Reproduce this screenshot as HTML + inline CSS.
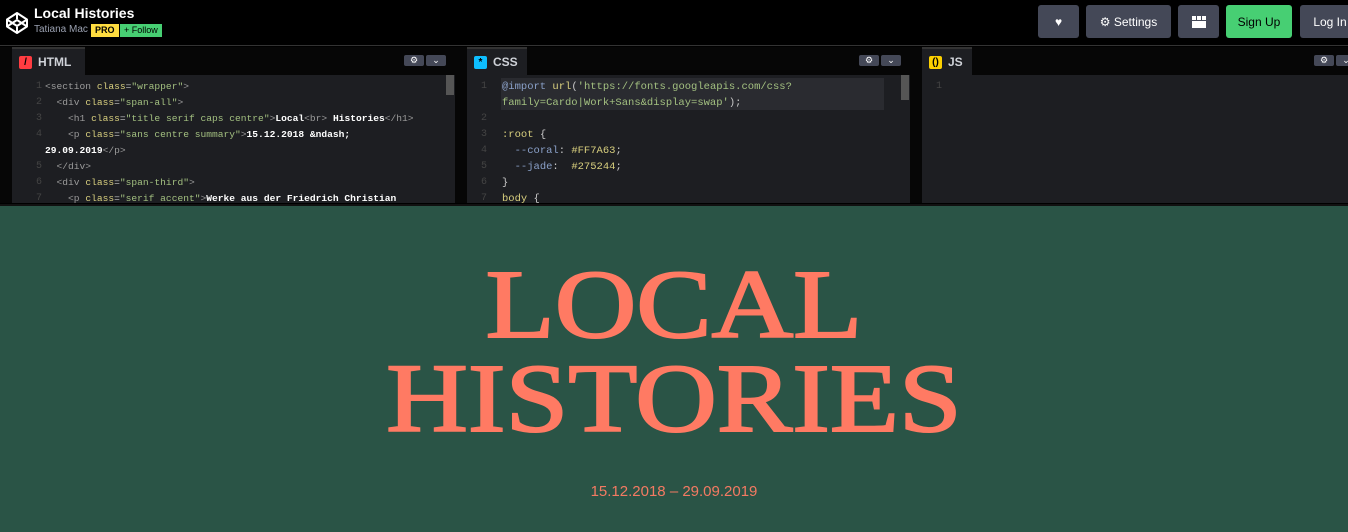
<!DOCTYPE html>
<html><head><meta charset="utf-8"><style>
*{margin:0;padding:0;box-sizing:border-box}
body{width:1348px;height:532px;background:#000;overflow:hidden;font-family:"Liberation Sans",sans-serif;position:relative}
.hdr{position:absolute;left:0;top:0;width:1348px;height:46px;background:#000;border-bottom:1px solid #333}
.logo{position:absolute;left:5px;top:11px}
.title{position:absolute;left:34px;top:5px;color:#fff;font-weight:bold;font-size:14px}
.sub{position:absolute;left:34px;top:24px;font-size:10px;color:#9aa0b0}
.pro{position:absolute;left:91px;top:24px;background:#ffdd40;color:#000;font-size:9px;font-weight:bold;padding:1px 4px;line-height:11px}
.fol{position:absolute;left:120px;top:24px;background:#47cf73;color:#000;font-size:9px;padding:1px 4px;line-height:11px}
.btn{position:absolute;top:5px;height:33px;background:#444857;border-radius:3px;color:#fff;font-size:12px;display:flex;align-items:center;justify-content:center}
.ed{position:absolute;top:47px;height:156px;background:#1d1e22}
.tabbar{position:absolute;left:0;top:0;right:0;height:28px;background:#060606}
.tab{position:absolute;left:0;top:0;height:28px;background:#1d1e22;color:#cfd2d8;font-weight:bold;font-size:12px;display:flex;align-items:center;padding-left:7px;border-top:2px solid #333;}
.ic{width:13px;height:13px;border-radius:2px;margin-right:6px;display:inline-block;font-size:10px;text-align:center;line-height:13px;color:#000}
.sb{position:absolute;top:8px;width:20px;height:11px;background:#444857;border-radius:2px;color:#fff;font-size:9px;line-height:11px;text-align:center}
.code{position:absolute;top:32px;left:0;font-family:"Liberation Mono",monospace;font-size:10.5px;line-height:16px;color:#c8c8c8;white-space:pre}
.ln{position:absolute;left:0;width:30px;text-align:right;color:#444;font-family:"Liberation Mono",monospace;font-size:10px;line-height:16px}
.t{color:#9b9b9b}.a{color:#d8cf7e}.s{color:#a3c080}.w{color:#fff;font-weight:bold}
.res{position:absolute;left:0;top:204px;width:1348px;height:328px;background:#2a5446;border-top:2px solid #111}
.h1{position:absolute;left:0;width:1348px;text-align:center;font-family:"Liberation Serif",serif;font-size:97px;line-height:97px;color:#ff7a63;-webkit-text-stroke:2px #ff7a63;transform:scaleX(1.165);transform-origin:674px 0}
.date{position:absolute;left:0;top:483px;width:1348px;text-align:center;color:#f47a62;font-size:15px}
</style></head><body>
<div class="hdr">
<svg class="logo" width="24" height="24" viewBox="0 0 24 24" fill="none" stroke="#fff" stroke-width="2" stroke-linejoin="round"><path d="M12 2L22 8.5V15.5L12 22L2 15.5V8.5Z M12 2V8 M12 16V22 M2 8.5L12 15L22 8.5 M2 15.5L12 9L22 15.5"/></svg>
<div class="title">Local Histories</div>
<div class="sub">Tatiana Mac</div>
<div class="pro">PRO</div>
<div class="fol">+ Follow</div>
<div class="btn" style="left:1038px;width:41px">♥</div>
<div class="btn" style="left:1086px;width:85px">⚙&nbsp;Settings</div>
<div class="btn" style="left:1178px;width:41px"><svg width="14" height="12"><rect x="0" y="0" width="4" height="4" fill="#fff"/><rect x="5" y="0" width="4" height="4" fill="#fff"/><rect x="10" y="0" width="4" height="4" fill="#fff"/><rect x="0" y="5" width="14" height="7" fill="#fff"/></svg></div>
<div class="btn" style="left:1226px;width:66px;background:#47cf73;color:#000">Sign Up</div>
<div class="btn" style="left:1300px;width:60px">Log In</div>
</div>
<div style="position:absolute;left:0;top:47px;width:12px;height:156px;background:#060606"></div>
<div class="ed" style="left:12px;width:443px">
<div class="tabbar"></div>
<div class="tab" style="width:73px"><span class="ic" style="background:#ff3c41">/</span>HTML</div>
<div class="sb" style="left:392px">⚙</div><div class="sb" style="left:414px">⌄</div>
<div style="position:absolute;left:434px;top:28px;width:8px;height:20px;background:#555"></div>
<div class="ln" style="top:32px">1<br>2<br>3<br>4<br><br>5<br>6<br>7</div>
<div class="code" style="left:33px;font-size:9.6px"><span class="t">&lt;section</span> <span class="a">class</span>=<span class="s">"wrapper"</span><span class="t">&gt;</span>
  <span class="t">&lt;div</span> <span class="a">class</span>=<span class="s">"span-all"</span><span class="t">&gt;</span>
    <span class="t">&lt;h1</span> <span class="a">class</span>=<span class="s">"title serif caps centre"</span><span class="t">&gt;</span><span class="w">Local</span><span class="t">&lt;br&gt;</span> <span class="w">Histories</span><span class="t">&lt;/h1&gt;</span>
    <span class="t">&lt;p</span> <span class="a">class</span>=<span class="s">"sans centre summary"</span><span class="t">&gt;</span><span class="w">15.12.2018 &amp;ndash;</span>
<span class="w">29.09.2019</span><span class="t">&lt;/p&gt;</span>
  <span class="t">&lt;/div&gt;</span>
  <span class="t">&lt;div</span> <span class="a">class</span>=<span class="s">"span-third"</span><span class="t">&gt;</span>
    <span class="t">&lt;p</span> <span class="a">class</span>=<span class="s">"serif accent"</span><span class="t">&gt;</span><span class="w">Werke aus der Friedrich Christian</span></div>
</div>
<div style="position:absolute;left:455px;top:47px;width:12px;height:156px;background:#060606"></div>
<div class="ed" style="left:467px;width:443px">
<div class="tabbar"></div>
<div class="tab" style="width:60px"><span class="ic" style="background:#0ebeff">*</span>CSS</div>
<div class="sb" style="left:392px">⚙</div><div class="sb" style="left:414px">⌄</div>
<div style="position:absolute;left:434px;top:28px;width:8px;height:25px;background:#555"></div>
<div style="position:absolute;left:34px;top:31px;width:383px;height:32px;background:#2a2b30"></div>
<div class="ln" style="top:32px;width:20px">1<br><br>2<br>3<br>4<br>5<br>6<br>7</div>
<div class="code" style="left:35px"><span style="color:#8aa0c8">@import</span> <span class="a">url</span>(<span class="s">'https://fonts.googleapis.com/css?</span>
<span class="s">family=Cardo|Work+Sans&amp;display=swap'</span>);

<span class="a">:root</span> {
  <span style="color:#8aa0c8">--coral</span>: <span class="a">#FF7A63</span>;
  <span style="color:#8aa0c8">--jade</span>:  <span class="a">#275244</span>;
}
<span class="a">body</span> {</div>
</div>
<div style="position:absolute;left:910px;top:47px;width:12px;height:156px;background:#060606"></div>
<div class="ed" style="left:922px;width:426px">
<div class="tabbar"></div>
<div class="tab" style="width:50px"><span class="ic" style="background:#fcd000">()</span>JS</div>
<div class="sb" style="left:392px">⚙</div><div class="sb" style="left:414px">⌄</div>
<div class="ln" style="top:32px;width:20px">1</div>
</div>
<div class="res"></div>
<div class="h1" style="top:256px">LOCAL</div>
<div class="h1" style="top:350px">HISTORIES</div>
<div class="date">15.12.2018 – 29.09.2019</div>
</body></html>
